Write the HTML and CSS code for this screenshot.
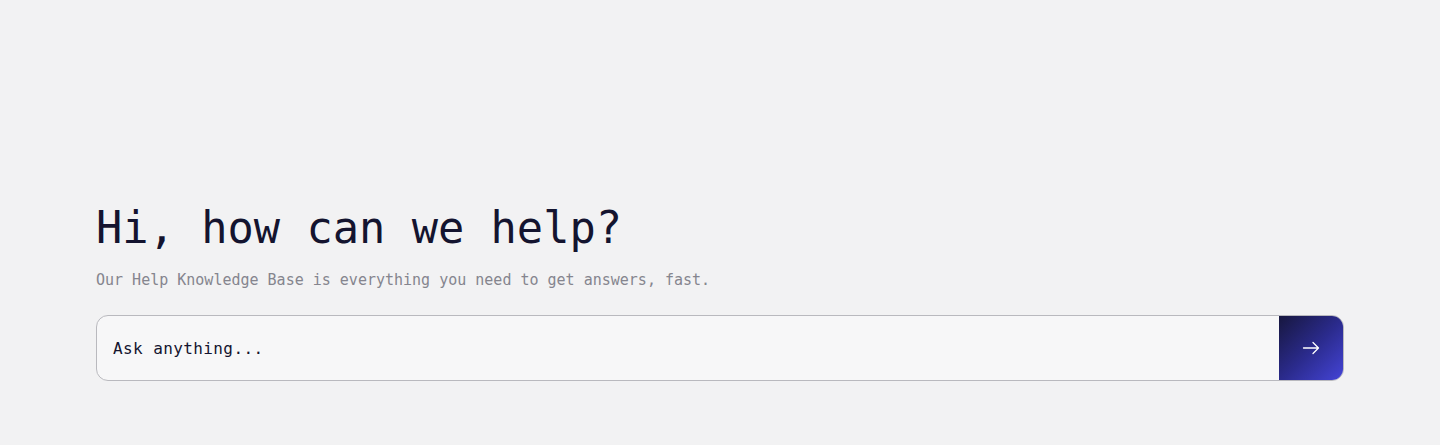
FILE: index.html
```html
<!DOCTYPE html>
<html lang="en">
<head>
<meta charset="utf-8">
<title>Help</title>
<link rel="stylesheet" href="styles.css">
</head>
<body>
<main class="hero">
  <h1 class="title">Hi, how can we help?</h1>
  <p class="subtitle">Our Help Knowledge Base is everything you need to get answers, fast.</p>
  <form class="search">
    <input class="search-input" type="text" placeholder="Ask anything...">
    <button class="search-btn" type="button" aria-label="Search">
      <svg width="20" height="20" viewBox="0 0 20 20" fill="none" stroke="#ffffff" stroke-width="1.3" stroke-linecap="round" stroke-linejoin="round">
        <path d="M2.5 10h15M12 4.5L17.5 10 12 15.5"/>
      </svg>
    </button>
  </form>
</main>
</body>
</html>
```
FILE: styles.css
```css
html, body {
  margin: 0;
  padding: 0;
}
body {
  background: #f2f2f3;
  font-family: "DejaVu Sans Mono", "Liberation Mono", monospace;
  height: 445px;
  overflow: hidden;
}
.hero {
  padding: 200px 96px 0 96px;
  display: flex;
  flex-direction: column;
}
.title {
  margin: 0;
  font-size: 43.7px;
  font-weight: 500;
  line-height: 56px;
  color: #14142f;
  letter-spacing: 0;
}
.subtitle {
  margin: 14px 0 0 0;
  font-size: 15px;
  line-height: 20px;
  color: #85858e;
}
.search {
  margin-top: 25px;
  display: flex;
  height: 66px;
  border: 1px solid #b9b9be;
  border-radius: 12px;
  background: #f7f7f8;
  overflow: hidden;
  box-sizing: border-box;
}
.search-input {
  flex: 1;
  border: none;
  outline: none;
  background: transparent;
  padding: 0 16px;
  font-family: "DejaVu Sans Mono", "Liberation Mono", monospace;
  font-size: 16px;
  letter-spacing: 0.4px;
  color: #14142f;
}
.search-input::placeholder {
  color: #14142f;
  opacity: 1;
}
.search-btn {
  width: 64px;
  border: none;
  padding: 0;
  display: flex;
  align-items: center;
  justify-content: center;
  background: linear-gradient(135deg, #17173f 0%, #2a2a8a 50%, #4444d6 100%);
  cursor: pointer;
}
```
